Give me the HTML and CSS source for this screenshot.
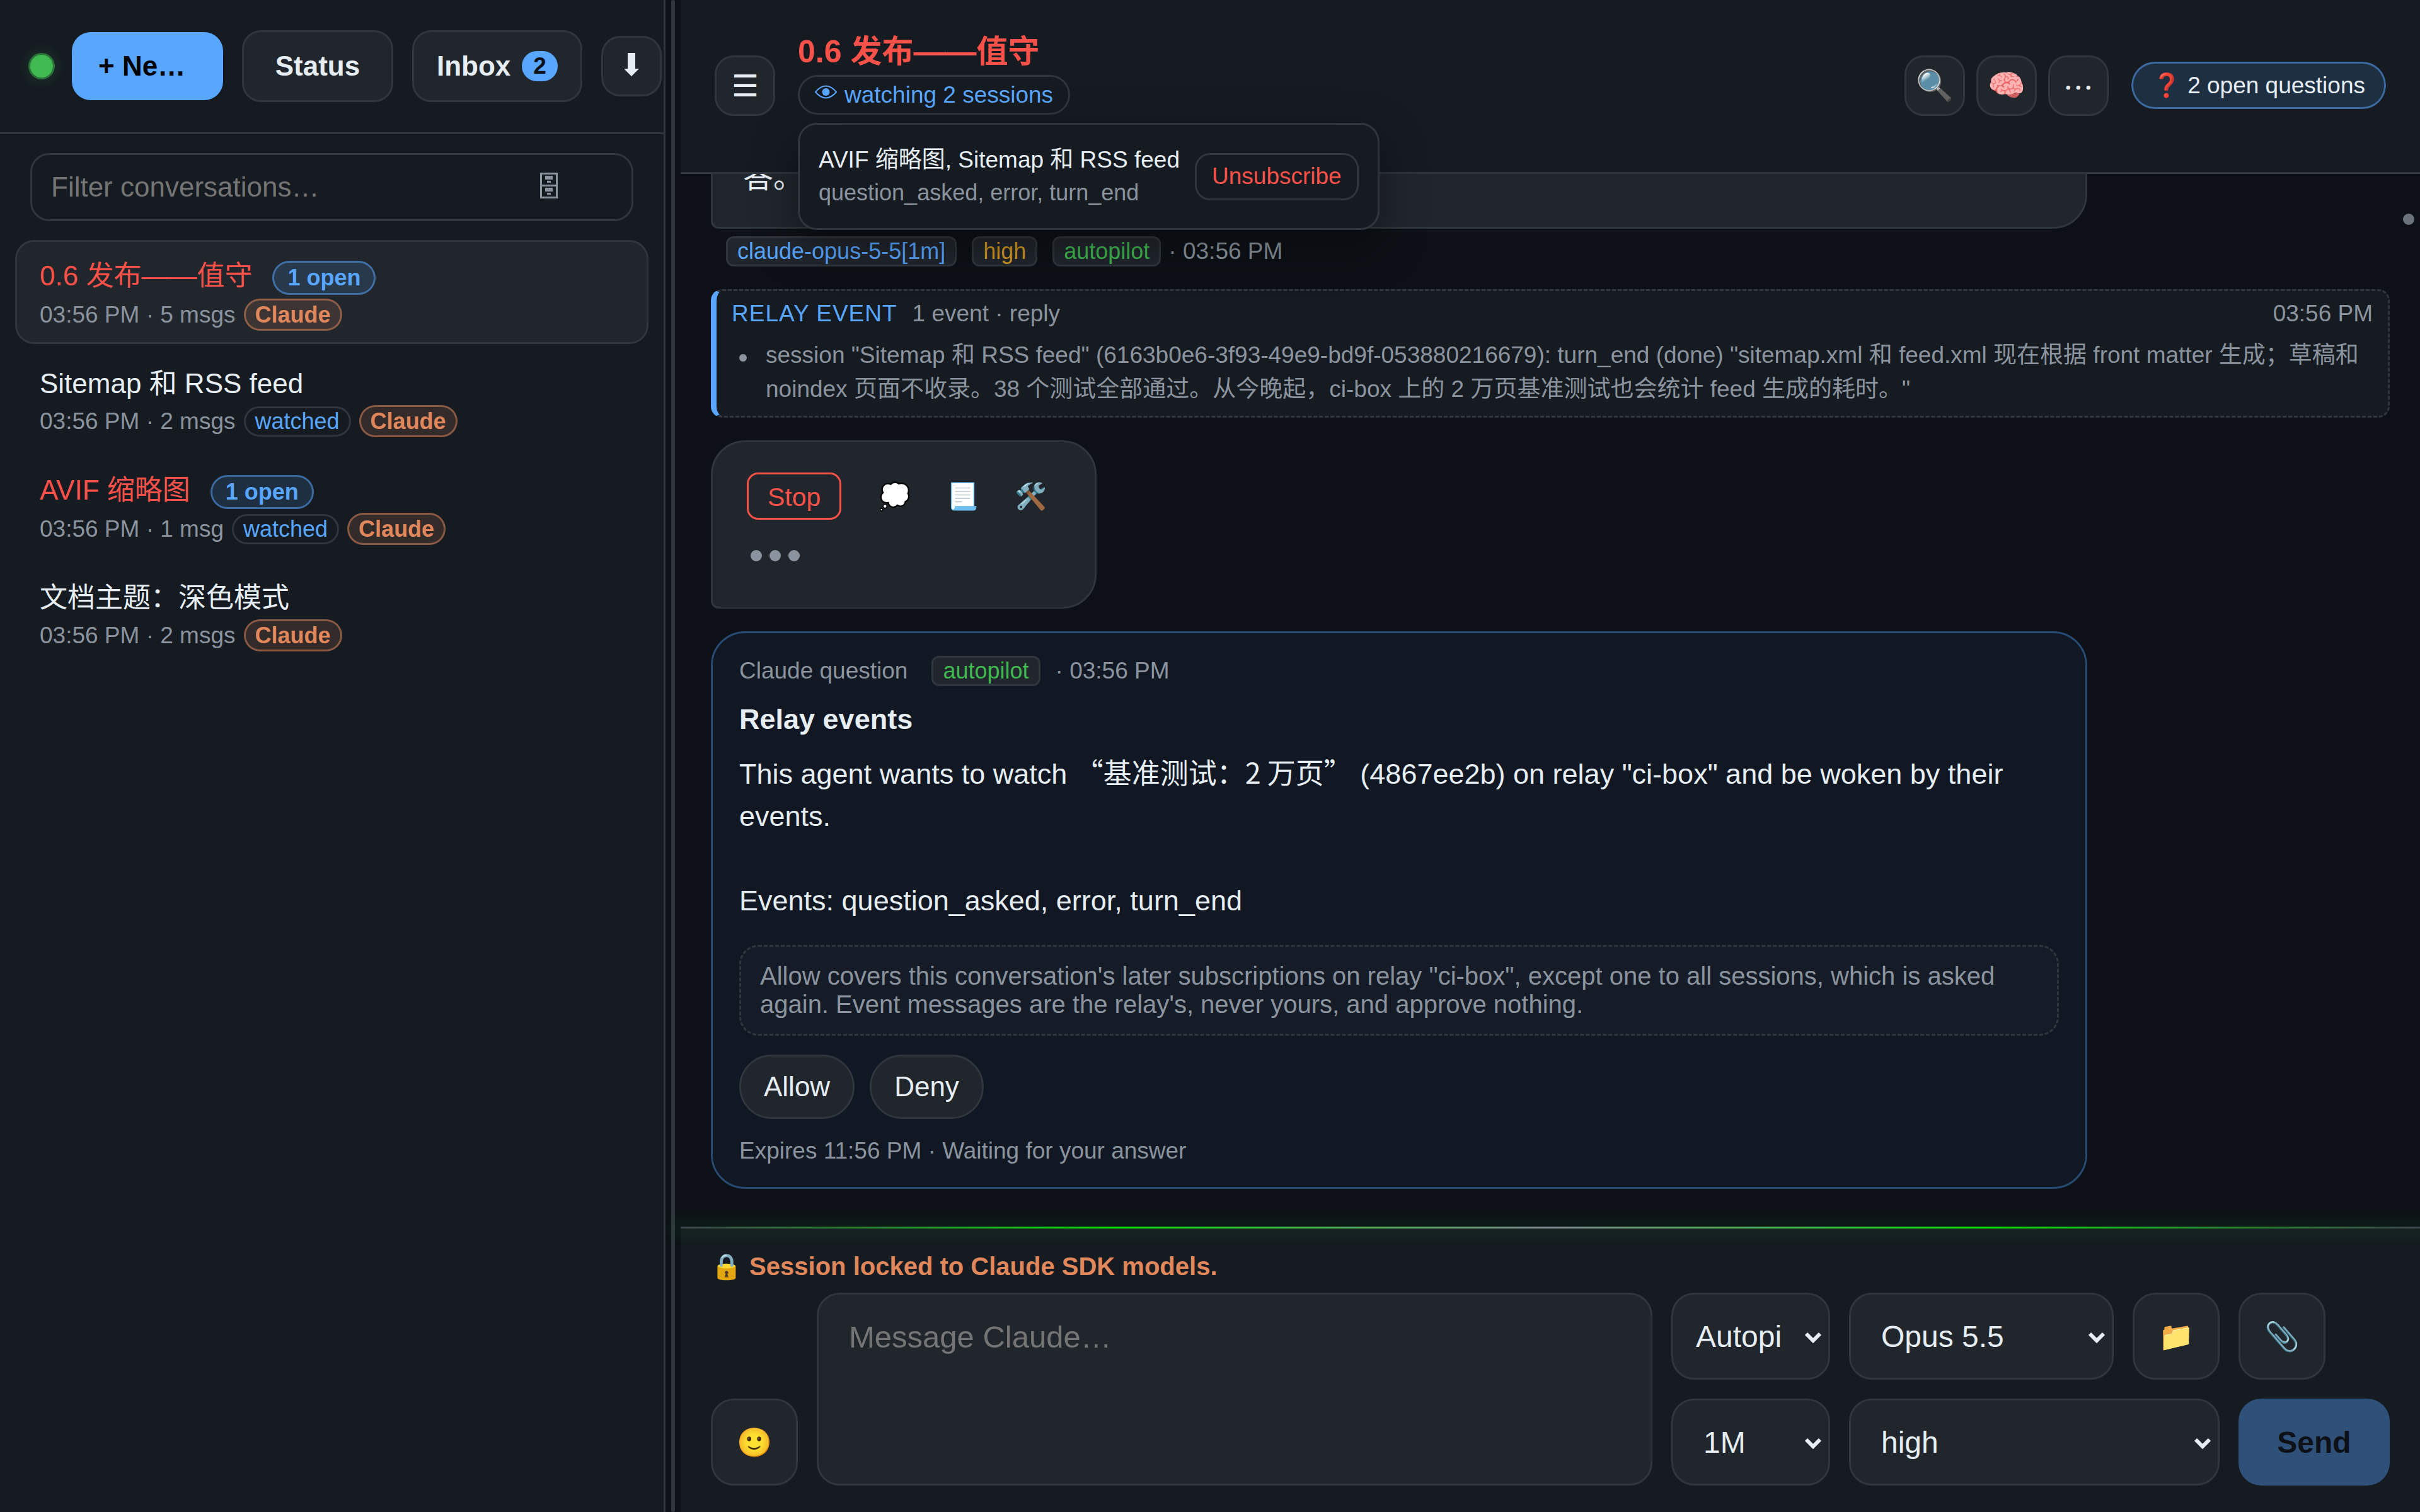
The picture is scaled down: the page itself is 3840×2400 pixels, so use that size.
FILE: index.html
```html
<!DOCTYPE html>
<html lang="zh-CN">
<head>
    <meta charset="UTF-8">
    <meta name="viewport" content="width=device-width, initial-scale=1.0">
    <title>0.6 发布——值守</title>
    <link rel="stylesheet" href="styles.css">
</head>
<body>
    <aside class="sidebar">
        <div class="sidebar-header">
            <span class="status-dot"></span>
            <button class="btn btn-new" type="button"><span>+ New chat</span></button>
            <button class="btn btn-status" type="button">Status</button>
            <button class="btn btn-inbox" type="button">Inbox <span class="count">2</span></button>
            <button class="icon-btn" type="button" aria-label="Install">
                <svg class="icon-down" viewBox="0 0 24 42"><path d="M6 0h12v25h6L12 37 0 25h6z"/></svg>
            </button>
        </div>

        <div class="filter">
            <input type="text" placeholder="Filter conversations…" aria-label="Filter conversations">
            <button type="button" aria-label="Archived">
                <svg class="icon-cabinet" viewBox="0 0 28 46">
                    <path class="frame" d="M1.5 1.5h25v38h-25zM1.5 20.5h25"/>
                    <path d="M8 5h12v6H8zM11 13h6v3h-6zM8 24h12v6H8zM11 32h6v3h-6z"/>
                </svg>
            </button>
        </div>

        <div class="conversations">
            <a href="#" class="conversation active">
                <div class="conversation-title alert">0.6 发布——值守 <span class="open-badge">1 open</span></div>
                <div class="conversation-meta">03:56 PM · 5 msgs <span class="pill claude">Claude</span></div>
            </a>
            <a href="#" class="conversation">
                <div class="conversation-title">Sitemap 和 RSS feed</div>
                <div class="conversation-meta">03:56 PM · 2 msgs <span class="pill watched">watched</span><span class="pill claude">Claude</span></div>
            </a>
            <a href="#" class="conversation">
                <div class="conversation-title alert">AVIF 缩略图 <span class="open-badge">1 open</span></div>
                <div class="conversation-meta">03:56 PM · 1 msg <span class="pill watched">watched</span><span class="pill claude">Claude</span></div>
            </a>
            <a href="#" class="conversation">
                <div class="conversation-title">文档主题：深色模式</div>
                <div class="conversation-meta">03:56 PM · 2 msgs <span class="pill claude">Claude</span></div>
            </a>
        </div>
    </aside>

    <div class="resizer"></div>

    <main class="main">
        <header class="chat-header">
            <button class="icon-btn" type="button" aria-label="Menu">☰</button>
            <div class="chat-heading">
                <h1>0.6 发布——值守</h1>
                <button class="watching" type="button">
                    <svg class="icon-eye" viewBox="0 0 35 31">
                        <path d="M1 11Q9 1.5 17.500 1.500T34 11Q26 20.500 17.500 20.500T1 11z"/>
                        <circle cx="17.500" cy="11" r="6"/>
                    </svg>
                    watching 2 sessions
                </button>
                <div class="watch-popover">
                    <div>
                        <div class="watch-names">AVIF 缩略图, Sitemap 和 RSS feed</div>
                        <div class="watch-events">question_asked, error, turn_end</div>
                    </div>
                    <button type="button">Unsubscribe</button>
                </div>
            </div>
            <div class="header-actions">
                <button class="icon-btn" type="button" aria-label="Search">🔍</button>
                <button class="icon-btn" type="button" aria-label="Memory">🧠</button>
                <button class="icon-btn" type="button" aria-label="More">⋯</button>
            </div>
            <button class="questions" type="button">❓ 2 open questions</button>
        </header>

        <section class="messages">
            <div class="bubble bubble-wide">答。</div>
            <div class="message-meta">
                <div class="chips">
                    <span class="chip model">claude-opus-5-5[1m]</span>
                    <span class="chip effort">high</span>
                    <span class="chip mode">autopilot</span>
                </div>
                <span>· 03:56 PM</span>
            </div>

            <div class="relay-event">
                <div class="relay-head">
                    <span class="relay-label">RELAY EVENT</span>
                    <span>1 event · reply</span>
                    <time>03:56 PM</time>
                </div>
                <ul>
                    <li>session "Sitemap 和 RSS feed" (6163b0e6-3f93-49e9-bd9f-053880216679): turn_end (done) "sitemap.xml 和 feed.xml 现在根据 front matter 生成；草稿和 noindex 页面不收录。38 个测试全部通过。从今晚起，ci-box 上的 2 万页基准测试也会统计 feed 生成的耗时。"</li>
                </ul>
            </div>

            <div class="bubble">
                <div class="stream-tools">
                    <button class="stop" type="button">Stop</button>
                    <div class="stream-icons">
                        <button type="button" aria-label="Thinking">💭</button>
                        <button type="button" aria-label="Output">📃</button>
                        <button type="button" aria-label="Tools">🛠️</button>
                    </div>
                </div>
                <div class="typing"><i></i><i></i><i></i></div>
            </div>

            <div class="question">
                <div class="question-head">
                    <span>Claude question</span>
                    <span class="chip mode">autopilot</span>
                    <span>· 03:56 PM</span>
                </div>
                <h2>Relay events</h2>
                <p class="question-body">This agent wants to watch <span class="session-name">“基准测试：2 万页”</span> (4867ee2b) on relay "ci-box" and be woken by their events.<br><br>Events: question_asked, error, turn_end</p>
                <p class="question-note">Allow covers this conversation's later subscriptions on relay "ci-box", except one to all sessions, which is asked again. Event messages are the relay's, never yours, and approve nothing.</p>
                <div class="answers">
                    <button type="button">Allow</button>
                    <button type="button">Deny</button>
                </div>
                <div class="question-foot">Expires 11:56 PM · Waiting for your answer</div>
            </div>

            <span class="scroll-dot"></span>
        </section>

        <form class="composer">
            <div class="lock-note">🔒 Session locked to Claude SDK models.</div>
            <div class="composer-row">
                <button class="tool-btn" type="button" aria-label="Emoji">🙂</button>
                <textarea placeholder="Message Claude…" aria-label="Message"></textarea>
                <div class="controls">
                    <div class="select">
                        <select class="mode-select" aria-label="Mode"><option>Autopilot</option></select>
                        <svg viewBox="0 0 28 18"><path d="M3 3l11 11L25 3"/></svg>
                    </div>
                    <div class="select">
                        <select aria-label="Model"><option>Opus 5.5</option></select>
                        <svg viewBox="0 0 28 18"><path d="M3 3l11 11L25 3"/></svg>
                    </div>
                    <button class="tool-btn" type="button" aria-label="Folder">📁</button>
                    <button class="tool-btn" type="button" aria-label="Attach">📎</button>
                    <div class="select">
                        <select aria-label="Context"><option>1M</option></select>
                        <svg viewBox="0 0 28 18"><path d="M3 3l11 11L25 3"/></svg>
                    </div>
                    <div class="select select-wide">
                        <select aria-label="Effort"><option>high</option></select>
                        <svg viewBox="0 0 28 18"><path d="M3 3l11 11L25 3"/></svg>
                    </div>
                    <button class="send" type="submit">Send</button>
                </div>
            </div>
        </form>
    </main>
</body>
</html>
```

FILE: styles.css
```css
:root {
    --bg: #0d1117;
    --panel: #161b22;
    --surface: #21262d;
    --border: #30363d;
    --text: #e6edf3;
    --muted: #8b949e;
    --accent: #58a6ff;
    --green: #3fb950;
    --red: #f85149;
    --claude: #e0875c;
}

* {
    box-sizing: border-box;
}

body {
    margin: 0;
    height: 100vh;
    display: flex;
    overflow: hidden;
    background: var(--bg);
    color: var(--text);
    font-family: "Liberation Sans", "Noto Sans CJK SC", sans-serif;
    font-size: 45px;
}

button,
input,
select,
textarea {
    font: inherit;
    color: inherit;
    margin: 0;
    padding: 0;
}

button {
    cursor: pointer;
    white-space: nowrap;
}

/* Sidebar */
.sidebar {
    flex: 0 0 1056px;
    background: var(--panel);
    border-right: 3px solid var(--border);
}

.sidebar-header {
    display: flex;
    align-items: center;
    gap: 30px;
    padding: 48px 0 48px 48px;
    border-bottom: 3px solid var(--border);
}

.status-dot {
    flex: none;
    width: 36px;
    height: 36px;
    border-radius: 50%;
    background: var(--green);
    box-shadow: 0 0 0 3px rgba(63, 185, 80, 0.5), 0 0 24px rgba(63, 185, 80, 0.3);
}

.btn {
    flex: none;
    height: 114px;
    border: 3px solid var(--border);
    border-radius: 30px;
    background: var(--surface);
    font-size: 44px;
    font-weight: bold;
}

.btn-new {
    width: 240px;
    height: 108px;
    padding: 0 42px;
    border: none;
    background: var(--accent);
    color: #000;
}

.btn-new span {
    display: block;
    overflow: hidden;
    text-overflow: ellipsis;
}

.btn-status {
    width: 240px;
}

.btn-inbox {
    display: flex;
    align-items: center;
    gap: 18px;
    padding: 0 36px;
}

.count {
    padding: 0 18px;
    border-radius: 24px;
    background: var(--accent);
    color: var(--bg);
    font-size: 37px;
    line-height: 48px;
}

.icon-btn {
    flex: none;
    width: 96px;
    height: 96px;
    border: 3px solid var(--border);
    border-radius: 30px;
    background: var(--surface);
    font-size: 48px;
}

.icon-down,
.icon-cabinet {
    display: block;
    margin: 0 auto;
    fill: currentColor;
}

.icon-down {
    width: 24px;
}

.icon-cabinet {
    width: 28px;
}

.icon-cabinet .frame {
    fill: none;
    stroke: currentColor;
    stroke-width: 3;
}

.filter {
    position: relative;
    margin: 30px 48px;
}

.filter input {
    display: block;
    width: 100%;
    height: 108px;
    padding: 0 30px;
    border: 3px solid var(--border);
    border-radius: 30px;
    background: var(--panel);
    font-size: 44px;
}

.filter input::placeholder,
.composer textarea::placeholder {
    color: #757575;
}

.filter button {
    position: absolute;
    top: 18px;
    right: 98px;
    width: 72px;
    height: 72px;
    border: none;
    background: none;
    color: var(--muted);
}

.conversations {
    display: flex;
    flex-direction: column;
    gap: 6px;
    padding: 0 24px;
}

.conversation {
    padding: 18px 36px;
    border: 3px solid transparent;
    border-radius: 30px;
    color: var(--text);
    text-decoration: none;
}

.conversation.active {
    background: var(--surface);
    border-color: var(--border);
}

.conversation-title {
    display: flex;
    align-items: baseline;
    gap: 32px;
    margin-bottom: 6px;
    font-size: 44px;
}

.conversation-title.alert {
    color: var(--red);
}

.open-badge {
    padding: 0 21px;
    border: 3px solid rgba(88, 166, 255, 0.5);
    border-radius: 27px;
    background: rgba(88, 166, 255, 0.15);
    color: var(--accent);
    font-size: 36px;
    font-weight: bold;
    line-height: 48px;
}

.conversation-meta {
    display: flex;
    align-items: center;
    gap: 13px;
    height: 51px;
    color: var(--muted);
    font-size: 37px;
}

.pill {
    padding: 0 15px;
    border: 3px solid var(--border);
    border-radius: 26px;
    font-size: 36px;
    line-height: 42px;
}

.pill.watched {
    color: var(--accent);
}

.pill.claude {
    border-color: rgba(224, 135, 92, 0.5);
    background: rgba(224, 135, 92, 0.15);
    color: var(--claude);
    font-weight: bold;
    line-height: 45px;
}

.resizer {
    flex: 0 0 24px;
    padding: 0 9px;
}

.resizer::before {
    content: "";
    display: block;
    height: 100%;
    border-radius: 3px;
    background: var(--border);
}

/* Chat header */
.main {
    flex: 1;
    min-width: 0;
    display: flex;
    flex-direction: column;
}

.chat-header {
    display: flex;
    align-items: center;
    gap: 36px;
    padding: 41px 54px 43px;
    background: var(--panel);
    border-bottom: 3px solid var(--border);
}

.chat-heading {
    position: relative;
    flex: 1;
    padding-bottom: 48px;
}

.chat-heading h1 {
    margin: 0 0 6px;
    color: var(--red);
    font-size: 50px;
}

.watching {
    display: flex;
    align-items: center;
    gap: 12px;
    height: 63px;
    padding: 0 24px;
    border: 3px solid var(--border);
    border-radius: 32px;
    background: none;
    color: var(--accent);
    font-size: 37px;
}

.icon-eye {
    width: 35px;
    fill: none;
    stroke: currentColor;
    stroke-width: 2;
}

.icon-eye circle {
    fill: currentColor;
    stroke: none;
}

.watch-popover {
    position: absolute;
    top: 154px;
    left: 0;
    z-index: 10;
    display: flex;
    align-items: center;
    gap: 24px;
    padding: 30px;
    border: 3px solid var(--border);
    border-radius: 30px;
    background: var(--panel);
    box-shadow: 0 24px 72px rgba(0, 0, 0, 0.4);
    font-size: 37px;
    line-height: 52px;
    white-space: nowrap;
}

.watch-events {
    color: var(--muted);
    font-size: 36px;
}

.watch-popover button {
    height: 75px;
    padding: 0 24px;
    border: 3px solid var(--border);
    border-radius: 24px;
    background: none;
    color: var(--red);
}

.header-actions {
    display: flex;
    gap: 18px;
}

.questions {
    height: 75px;
    padding: 0 30px;
    border: 3px solid rgba(88, 166, 255, 0.5);
    border-radius: 38px;
    background: rgba(88, 166, 255, 0.15);
    font-size: 37px;
}

/* Messages */
.messages {
    position: relative;
    flex: 1;
    min-height: 0;
    overflow: hidden;
    display: flex;
    flex-direction: column;
    align-items: flex-start;
    justify-content: flex-end;
    padding: 0 48px 60px;
}

.messages > * {
    flex: none;
}

.bubble {
    padding: 42px 48px;
    border: 3px solid var(--border);
    border-radius: 54px 54px 54px 12px;
    background: var(--surface);
    font-size: 48px;
    line-height: 72px;
}

.bubble-wide {
    width: 82%;
}

.message-meta {
    display: flex;
    align-items: center;
    gap: 12px;
    margin: 12px 24px 36px;
    color: var(--muted);
    font-size: 37px;
}

.chips {
    display: flex;
    gap: 24px;
}

.chip {
    padding: 0 15px;
    border: 3px solid var(--border);
    border-radius: 12px;
    background: var(--surface);
    font-size: 36px;
    line-height: 42px;
}

.chip.model {
    color: var(--accent);
}

.chip.effort {
    color: #d29922;
}

.chip.mode {
    color: var(--green);
}

.relay-event {
    width: 100%;
    margin-bottom: 36px;
    padding: 15px 24px;
    border: 3px dashed var(--border);
    border-left: 9px solid var(--accent);
    border-radius: 18px;
    background: var(--panel);
    color: var(--muted);
    font-size: 37px;
}

.relay-head {
    display: flex;
    gap: 24px;
    margin-bottom: 18px;
    line-height: 42px;
}

.relay-label {
    color: var(--accent);
    letter-spacing: 1px;
}

.relay-head time {
    margin-left: auto;
}

.relay-event ul {
    margin: 0;
    padding: 0;
    line-height: 54px;
    list-style: none;
}

.relay-event li {
    position: relative;
    padding-left: 54px;
}

.relay-event li::before {
    content: "";
    position: absolute;
    top: 25px;
    left: 12px;
    width: 12px;
    height: 12px;
    border-radius: 50%;
    background: currentColor;
}

.stream-tools {
    display: flex;
    align-items: center;
    gap: 39px;
    padding: 6px 9px 0 6px;
}

.stop {
    height: 75px;
    padding: 0 30px;
    border: 3px solid var(--red);
    border-radius: 18px;
    background: none;
    color: var(--red);
    font-size: 41px;
}

.stream-icons {
    display: flex;
    gap: 18px;
}

.stream-icons button {
    width: 90px;
    border: none;
    background: none;
    font-size: 41px;
}

.typing {
    display: flex;
    gap: 12px;
    padding: 48px 12px 30px;
}

.typing i {
    width: 18px;
    height: 18px;
    border-radius: 50%;
    background: var(--muted);
}

.question {
    display: flex;
    flex-direction: column;
    gap: 30px;
    width: 82%;
    margin-top: 36px;
    padding: 36px 42px;
    border: 3px solid #274a73;
    border-radius: 54px;
    background: #111823;
}

.question-head {
    display: flex;
    align-items: center;
    gap: 24px;
    color: var(--muted);
    font-size: 37px;
}

.question-head .chip {
    margin-left: 14px;
}

.question h2 {
    margin: 0;
    font-size: 45px;
    line-height: 46px;
}

.question p {
    margin: 0;
}

.question-body {
    padding-bottom: 7px;
    line-height: 67px;
}

/* full-width quotes around the session name */
.session-name {
    font-family: "Noto Sans CJK SC", sans-serif;
    line-height: 1;
}

.question .question-note {
    padding: 24px 30px;
    border: 3px dashed var(--border);
    border-radius: 30px;
    background: #151c27;
    color: var(--muted);
    font-size: 40px;
    line-height: 45px;
}

.answers {
    display: flex;
    gap: 24px;
}

.answers button {
    height: 102px;
    padding: 0 36px;
    border: 3px solid var(--border);
    border-radius: 51px;
    background: var(--surface);
    font-size: 44px;
}

.question-foot {
    color: var(--muted);
    font-size: 37px;
    line-height: 42px;
}

.scroll-dot {
    position: absolute;
    top: 63px;
    right: 9px;
    width: 18px;
    height: 18px;
    border-radius: 50%;
    background: #6a727b;
}

/* Composer */
.composer {
    position: relative;
    padding: 36px 48px 42px;
    background: var(--panel);
}

.composer::before {
    content: "";
    position: absolute;
    top: 0;
    left: 0;
    right: 0;
    height: 3px;
    background: linear-gradient(90deg, #3d444d, #0be60b 25%, #868d96 50%, #0be60b 75%, #3d444d);
    box-shadow: 0 0 12px 18px rgba(11, 230, 11, 0.04);
}

.lock-note {
    margin-bottom: 15px;
    color: var(--claude);
    font-size: 40px;
    font-weight: bold;
    line-height: 54px;
}

.composer-row {
    display: flex;
    align-items: flex-end;
    gap: 30px;
    font-size: 48px;
}

.tool-btn,
.select select,
.composer textarea {
    border: 3px solid var(--border);
    border-radius: 36px;
    background: var(--surface);
}

.tool-btn {
    width: 138px;
    height: 138px;
    font-size: 45px;
}

.composer textarea {
    flex: 1;
    min-width: 0;
    align-self: stretch;
    padding: 36px 48px;
    font-size: 49px;
    line-height: 62px;
    resize: none;
}

.controls {
    display: grid;
    grid-template-columns: 252px 420px 138px 240px;
    grid-auto-rows: 138px;
    gap: 30px;
}

.select {
    position: relative;
}

.select-wide {
    grid-column: span 2;
}

.select select {
    width: 100%;
    height: 100%;
    padding: 0 72px 0 48px;
    appearance: none;
}

.select .mode-select {
    padding-left: 36px;
}

.select svg {
    position: absolute;
    top: 62px;
    right: 13px;
    width: 28px;
    height: 18px;
    fill: none;
    stroke: var(--text);
    stroke-width: 6;
    pointer-events: none;
}

.send {
    border: none;
    border-radius: 36px;
    background: #2f5179;
    color: var(--bg);
    font-weight: bold;
}
```
